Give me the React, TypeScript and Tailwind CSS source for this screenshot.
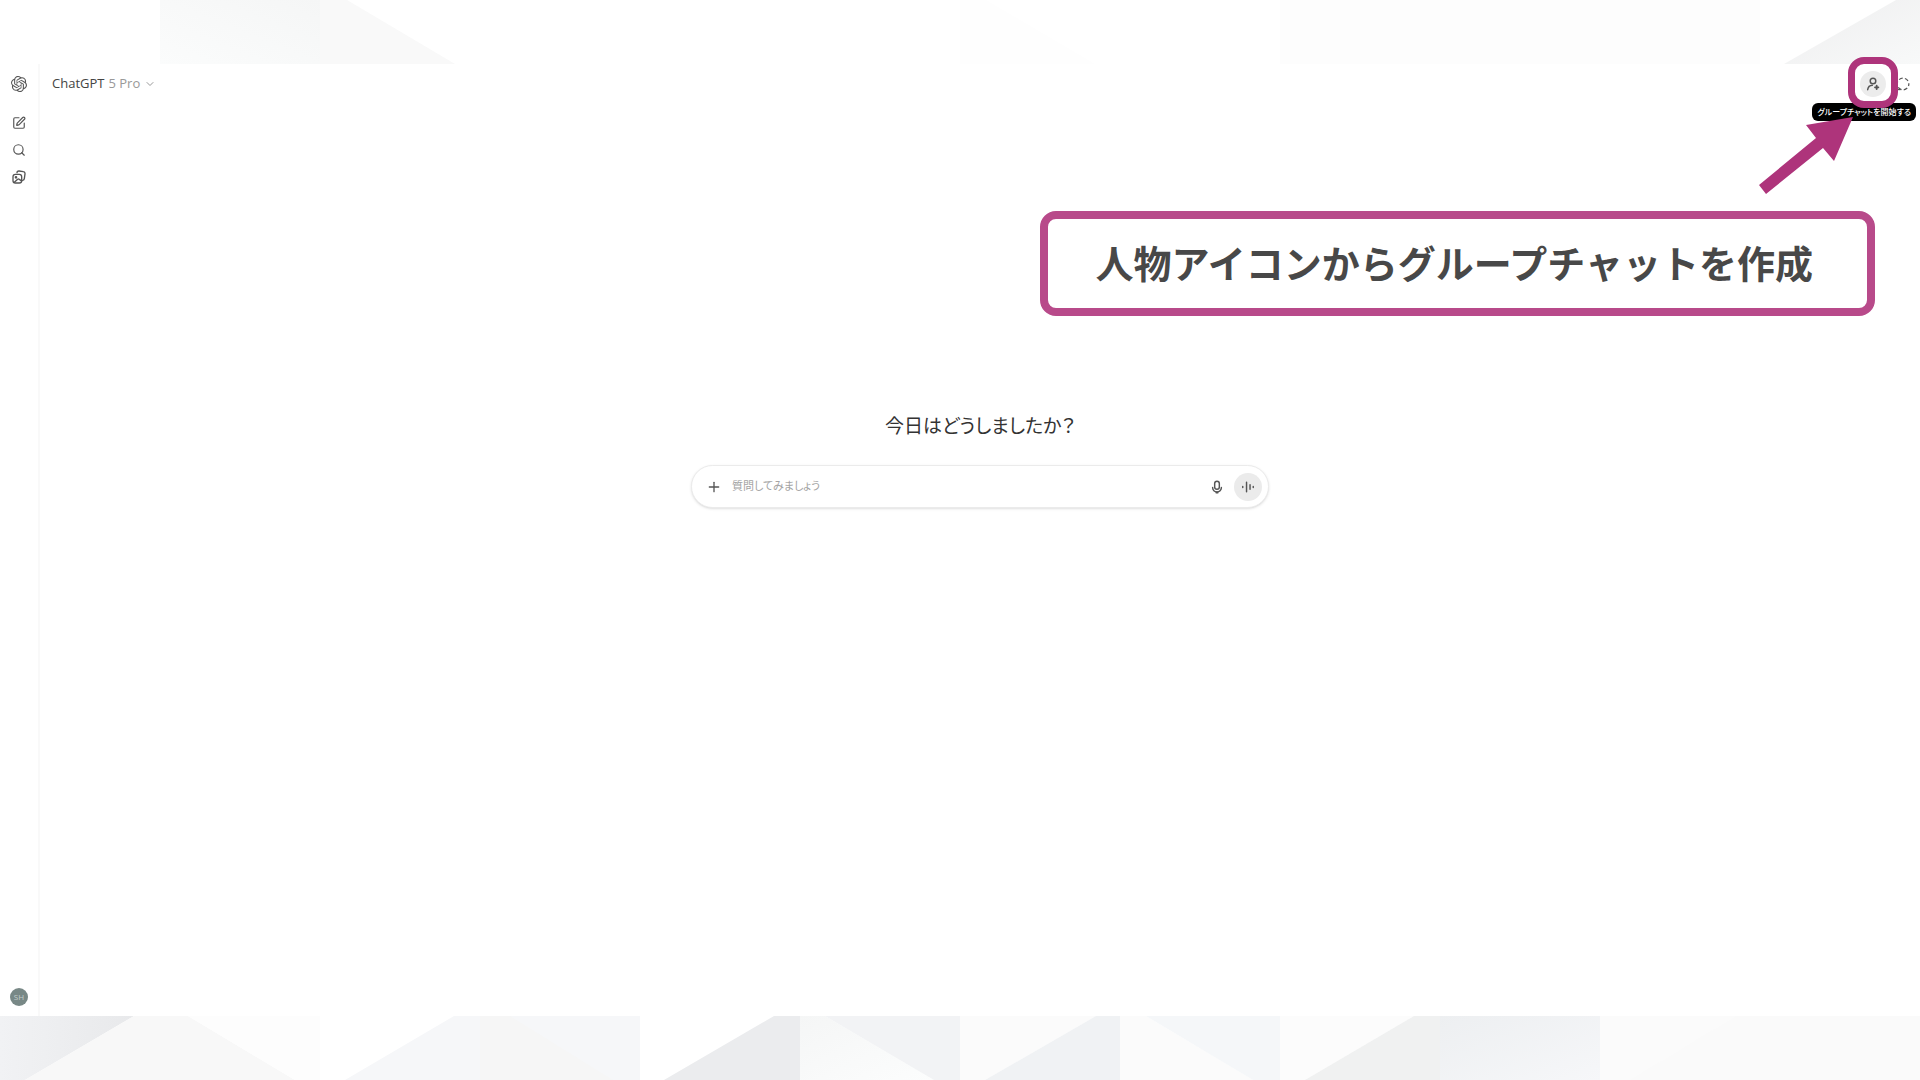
import React, { useState } from "react";
import { ChevronDown, Plus, Search, SquarePen } from "lucide-react";
import { SiOpenai } from "react-icons/si";

function LibraryIcon() {
  return (
    <svg viewBox="0 0 24 24" className="size-4" fill="none" stroke="currentColor" strokeWidth="2" strokeLinecap="round" strokeLinejoin="round">
      <path d="M9 5.500A2.600 2.600 0 0 1 12 3l6.500 1A2.800 2.800 0 0 1 21 7.200l-1 7.300a2.800 2.800 0 0 1-2.500 2.500" />
      <rect x="3" y="8" width="13" height="13" rx="3.500" />
      <circle cx="7.500" cy="12.500" r="1" />
      <path d="m5 20 5-4.500a2 2 0 0 1 2.500 0L16 18" />
    </svg>
  );
}

function PersonAddIcon() {
  return (
    <svg viewBox="0 0 24 24" className="size-4" fill="none" stroke="currentColor" strokeWidth="2.200" strokeLinecap="round">
      <circle cx="12" cy="7.500" r="4.200" />
      <path d="M4 20.500c.600-3.800 3.200-6.300 7-6.500" />
      <path d="M17.500 14.500v5M15 17h5" strokeWidth="2.800" />
    </svg>
  );
}

function TemporaryChatIcon() {
  return (
    <svg viewBox="0 0 24 24" className="size-3.5" fill="none" stroke="currentColor" strokeWidth="2.200">
      <circle cx="12" cy="12" r="10" strokeDasharray="6.500 3.970" strokeDashoffset="3" />
      <path d="M2.500 21.500H8" />
    </svg>
  );
}

function MicIcon() {
  return (
    <svg viewBox="0 0 24 24" className="size-3.5" fill="none" stroke="currentColor" strokeWidth="2.500" strokeLinecap="round">
      <rect x="8" y="2" width="8" height="14" rx="4" />
      <path d="M4.500 13a7.500 7.500 0 0 0 15 0" />
      <path d="M12 20.500V22M10.500 22h3" />
    </svg>
  );
}

function VoiceIcon() {
  return (
    <svg viewBox="0 0 24 24" className="size-3.5" fill="none" stroke="currentColor" strokeWidth="2.500" strokeLinecap="round">
      <path d="M3 11v2M9.500 4v16M15.500 8v8M21 11v2" />
    </svg>
  );
}

function TopPattern() {
  return (
    <svg viewBox="0 0 1920 64" preserveAspectRatio="none" className="h-16 w-full shrink-0" aria-hidden="true">
      <defs>
        <linearGradient id="t1" x1="0" y1="1" x2="1" y2="0">
          <stop offset="0" stopColor="#fbfcfc" />
          <stop offset="1" stopColor="#f5f6f6" />
        </linearGradient>
        <linearGradient id="t2" x1="0" y1="0" x2="1" y2="1">
          <stop offset="0" stopColor="#eeeeef" />
          <stop offset="1" stopColor="#f8f9f9" />
        </linearGradient>
      </defs>
      <polygon points="160,0 320,0 320,64 160,64" fill="url(#t1)" />
      <polygon points="320,0 347,0 455,64 320,64" fill="#f9f9f9" />
      <polygon points="960,0 986,0 1095,64 960,64" fill="#fefefe" />
      <polygon points="1280,0 1760,0 1760,64 1280,64" fill="#fdfdfd" />
      <polygon points="1896,0 1920,0 1920,64 1784,64" fill="url(#t2)" />
    </svg>
  );
}

function BottomPattern() {
  return (
    <svg viewBox="0 0 1920 64" preserveAspectRatio="none" className="h-16 w-full shrink-0" aria-hidden="true">
      <defs>
        <linearGradient id="b1">
          <stop offset="0" stopColor="#f1f2f4" />
          <stop offset="1" stopColor="#e8e9eb" />
        </linearGradient>
        <linearGradient id="b2" x1="0" y1="0" x2="1" y2="1">
          <stop offset="0" stopColor="#f5f6f6" />
          <stop offset="1" stopColor="#fcfdfd" />
        </linearGradient>
        <linearGradient id="b3" x1="0" y1="0" x2="1" y2="1">
          <stop offset="0" stopColor="#edeff1" />
          <stop offset="1" stopColor="#f6f7f9" />
        </linearGradient>
      </defs>
      <polygon points="0,0 134,0 25,64 0,64" fill="url(#b1)" />
      <polygon points="134,0 188,0 295,64 25,64" fill="#f8f8f8" />
      <polygon points="188,0 320,0 320,64 295,64" fill="#fdfdfd" />
      <polygon points="454,0 640,0 640,64 345,64" fill="#f6f7f9" />
      <polygon points="480,0 510,0 613,64 480,64" fill="#f6f6f6" />
      <polygon points="774,0 800,0 800,64 664,64" fill="#ebecee" />
      <polygon points="800,0 825,0 934,64 800,64" fill="url(#b2)" />
      <polygon points="825,0 960,0 960,64 934,64" fill="#f2f3f5" />
      <polygon points="960,0 1096,0 985,64 960,64" fill="#fbfbfb" />
      <polygon points="1096,0 1120,0 1120,64 985,64" fill="#f0f2f4" />
      <polygon points="1120,0 1146,0 1253,64 1120,64" fill="#fbfbfb" />
      <polygon points="1146,0 1280,0 1280,64 1253,64" fill="#f5f7f9" />
      <polygon points="1280,0 1414,0 1305,64 1280,64" fill="#fcfcfc" />
      <polygon points="1414,0 1440,0 1440,64 1305,64" fill="#f0f1f1" />
      <polygon points="1440,0 1600,0 1600,64 1440,64" fill="url(#b3)" />
      <polygon points="1600,0 1920,0 1920,64 1600,64" fill="#fbfbfb" />
      <polygon points="1736,0 1920,0 1920,64 1630,64" fill="#fafafa" />
    </svg>
  );
}

function Sidebar() {
  return (
    <aside className="w-10 shrink-0 flex flex-col items-center border-r-2 border-[#f9f9f9] text-[#555]">
      <a href="#home" aria-label="ChatGPT" className="h-10 flex items-center">
        <SiOpenai className="size-4 stroke-current" />
      </a>
      <nav className="mt-[5px] flex flex-col items-center">
        <button aria-label="新しいチャット" className="h-[27px] flex items-center">
          <SquarePen className="size-3.5" />
        </button>
        <button aria-label="チャットを検索" className="h-[27px] flex items-center">
          <Search className="size-3.5" />
        </button>
        <button aria-label="ライブラリ" className="h-[27px] flex items-center">
          <LibraryIcon />
        </button>
      </nav>
      <button aria-label="アカウント" className="mt-auto mb-2.5 size-[18px] rounded-full bg-[#788886] text-[8px] leading-none text-[#c3cecb]">
        SH
      </button>
    </aside>
  );
}

function Header() {
  return (
    <header className="h-10 pl-3 pr-2.5 flex items-center justify-between">
      <button className="flex items-center gap-1 text-[13px] text-[#444]">
        ChatGPT <span className="text-[#999]">5 Pro</span>
        <ChevronDown className="size-3 text-[#999]" />
      </button>
      <div className="flex items-center gap-2.5 text-[#555]">
        <div className="relative">
          <button aria-label="グループチャットを開始する" aria-describedby="group-tip" className="size-6.5 flex items-center justify-center rounded-full bg-[#ececec]">
            <PersonAddIcon />
          </button>
          <div
            id="group-tip"
            role="tooltip"
            className="absolute top-8 -right-[30px] h-[18px] px-[5px] flex items-center rounded-md bg-black text-[8px] font-medium text-white whitespace-nowrap [font-feature-settings:'palt']"
          >
            グループチャットを開始する
          </div>
          <div className="absolute -inset-x-3 -top-3.5 -bottom-[11px] rounded-2xl border-[7px] border-[#ae347b]" />
          <svg viewBox="0 0 94 78" className="absolute top-[46px] right-[33px] h-[78px] w-[94px]" fill="#ae347b" aria-hidden="true">
            <polygon points="94,0 47,8 57,21 0,68 7,77 64,31 75,44" />
          </svg>
        </div>
        <button aria-label="一時チャット">
          <TemporaryChatIcon />
        </button>
      </div>
    </header>
  );
}

function Composer() {
  const [text, setText] = useState("");

  return (
    <form
      onSubmit={(e) => e.preventDefault()}
      className="mt-[25px] mx-auto w-full max-w-[578px] h-[43px] pl-3.5 pr-1.5 flex items-center rounded-full border border-[#ebebeb] bg-white shadow-sm text-[#555]"
    >
      <button type="button" aria-label="追加">
        <Plus className="size-4" />
      </button>
      <input
        aria-label="質問してみましょう"
        value={text}
        onChange={(e) => setText(e.target.value)}
        placeholder="質問してみましょう"
        className="ml-2.5 flex-1 min-w-0 text-[11px] placeholder-[#a3a3a3] focus:outline-none [font-feature-settings:'palt']"
      />
      <button type="button" aria-label="音声入力">
        <MicIcon />
      </button>
      <button type="button" aria-label="音声モード" className="ml-2.5 size-7 flex items-center justify-center rounded-full bg-[#ebebeb]">
        <VoiceIcon />
      </button>
    </form>
  );
}

export default function App() {
  return (
    <div lang="ja" className="min-h-screen flex flex-col bg-white font-['Open_Sans','Noto_Sans_CJK_JP',sans-serif]">
      <TopPattern />
      <div className="flex-1 flex">
        <Sidebar />
        <main className="relative flex-1 min-w-0 flex flex-col">
          <Header />
          <h1 className="mt-[308px] text-center text-[19px] leading-7 text-[#333] [font-feature-settings:'palt']">
            今日はどうしましたか？
          </h1>
          <Composer />
          <p className="absolute top-[147px] right-[45px] pl-12 pr-[54px] py-6 rounded-2xl border-8 border-[#b84a8a] bg-white text-[38px] leading-[41px] font-bold text-[#484848] whitespace-nowrap">
            人物アイコンからグループチャットを作成
          </p>
        </main>
      </div>
      <BottomPattern />
    </div>
  );
}
